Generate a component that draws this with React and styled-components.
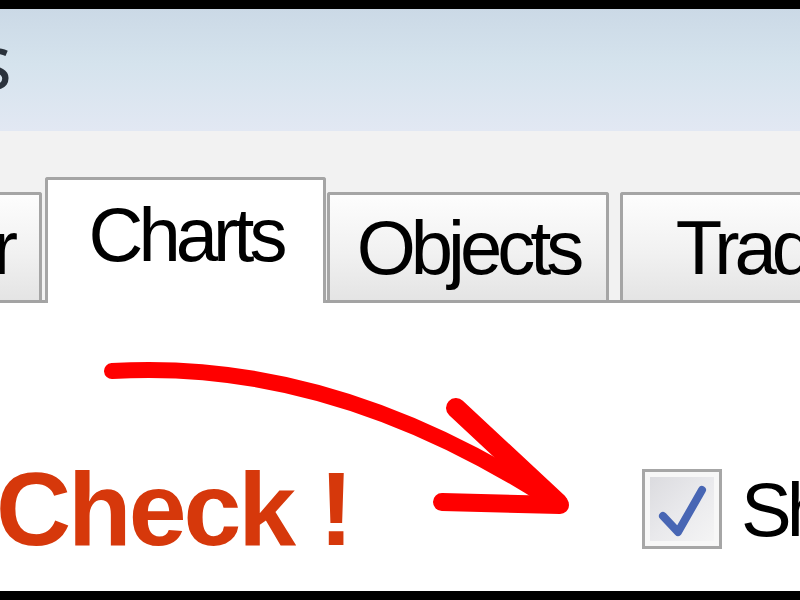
import React from 'react';
import styled, { createGlobalStyle } from 'styled-components';

const GlobalStyle = createGlobalStyle`
  html, body {
    margin: 0;
    padding: 0;
    background: #000;
  }
  body {
    width: 800px;
    height: 600px;
    overflow: hidden;
    font-family: "Liberation Sans", Arial, sans-serif;
  }
`;

const Frame = styled.div`
  width: 800px;
  height: 600px;
  display: flex;
  flex-direction: column;
  overflow: hidden;
  background: #000;
`;

const EdgeBar = styled.div`
  flex: 0 0 ${(p) => p.size}px;
  background: #000;
`;

const TitleBar = styled.div`
  flex: 0 0 122px;
  display: flex;
  align-items: flex-start;
  padding-top: 14px;
  box-sizing: border-box;
  background: linear-gradient(to bottom, #cbd9e6 0%, #d5e3ed 45%, #e2e8f3 100%);
  overflow: hidden;
`;

const TitleText = styled.div`
  flex: 0 0 312px;
  margin-left: -300px;
  display: flex;
  justify-content: flex-end;
  font-family: "Noto Sans", "Open Sans", sans-serif;
  font-size: 75px;
  line-height: 1;
  color: #2a323c;
`;

const TabStrip = styled.div`
  flex: 0 0 172px;
  box-sizing: border-box;
  display: flex;
  align-items: flex-end;
  background: #f2f2f2;
  border-bottom: 3px solid #a3a3a3;
  overflow: visible;
`;

const Tab = styled.div`
  box-sizing: border-box;
  flex: 0 0 ${(p) => p.width}px;
  margin-left: ${(p) => p.offset}px;
  height: ${(p) => (p.active ? 126 : 108)}px;
  margin-bottom: ${(p) => (p.active ? -3 : 0)}px;
  padding-top: ${(p) => (p.active ? 17 : 15)}px;
  padding-right: ${(p) => p.padRight || 0}px;
  display: flex;
  justify-content: ${(p) => (p.alignEnd ? 'flex-end' : 'center')};
  border: 3px solid #a5a5a5;
  border-bottom: none;
  border-radius: 3px 3px 0 0;
  background: ${(p) =>
    p.active ? '#ffffff' : 'linear-gradient(to bottom, #fdfdfd 0%, #f1f1f1 55%, #e4e4e4 100%)'};
  font-size: 76px;
  line-height: 76px;
  letter-spacing: -5px;
  color: #000;
  white-space: nowrap;
  overflow: hidden;
`;

const Content = styled.div`
  flex: 1;
  position: relative;
  background: #ffffff;
  padding-top: 156px;
  box-sizing: border-box;
  overflow: hidden;
`;

const Row = styled.div`
  height: 100px;
  display: flex;
  align-items: center;
  white-space: nowrap;
`;

const Callout = styled.div`
  flex: 0 0 646px;
  margin-left: -4px;
  font-weight: bold;
  font-size: 104px;
  letter-spacing: -3px;
  line-height: 1;
  color: #d6380b;
`;

const CheckBox = styled.div`
  flex: 0 0 80px;
  height: 80px;
  box-sizing: border-box;
  border: 3px solid #a6a6a6;
  box-shadow: inset 0 0 0 5px #f7f7f7;
  background: linear-gradient(135deg, #d9d9dd 0%, #e9e9ec 50%, #f6f6f6 100%);
  display: flex;
  align-items: center;
  justify-content: center;
`;

const CheckLabel = styled.span`
  margin-left: 19px;
  font-size: 76px;
  letter-spacing: -5px;
  color: #000;
`;

const Annotation = styled.svg`
  position: absolute;
  left: 0;
  top: 0;
  pointer-events: none;
`;

export default function App() {
  return (
    <>
      <GlobalStyle />
      <Frame>
        <EdgeBar size={9} />
        <TitleBar>
          <TitleText>Options</TitleText>
        </TitleBar>
        <TabStrip>
          <Tab width={300} offset={-258} alignEnd padRight={26}>Server</Tab>
          <Tab width={281} offset={3} active>Charts</Tab>
          <Tab width={282} offset={1}>Objects</Tab>
          <Tab width={282} offset={11}>Trade</Tab>
        </TabStrip>
        <Content>
          <Row>
            <Callout>Check !</Callout>
            <CheckBox>
              <svg width="74" height="74" viewBox="3 3 74 74">
                <path
                  d="M21 47 L36 63 L60 21"
                  fill="none"
                  stroke="#4866b4"
                  strokeWidth="8"
                  strokeLinecap="round"
                  strokeLinejoin="round"
                />
              </svg>
            </CheckBox>
            <CheckLabel>Show trade levels</CheckLabel>
          </Row>
          <Annotation width="800" height="288" viewBox="0 303 800 288">
            <g fill="none" stroke="#ff0000" strokeLinecap="round" strokeLinejoin="round">
              <path d="M112 371 Q330 358 548 498" strokeWidth="16" />
              <path d="M456 408 L558 503" strokeWidth="20" />
              <path d="M442 502 L560 505" strokeWidth="18" />
            </g>
          </Annotation>
        </Content>
        <EdgeBar size={9} />
      </Frame>
    </>
  );
}
